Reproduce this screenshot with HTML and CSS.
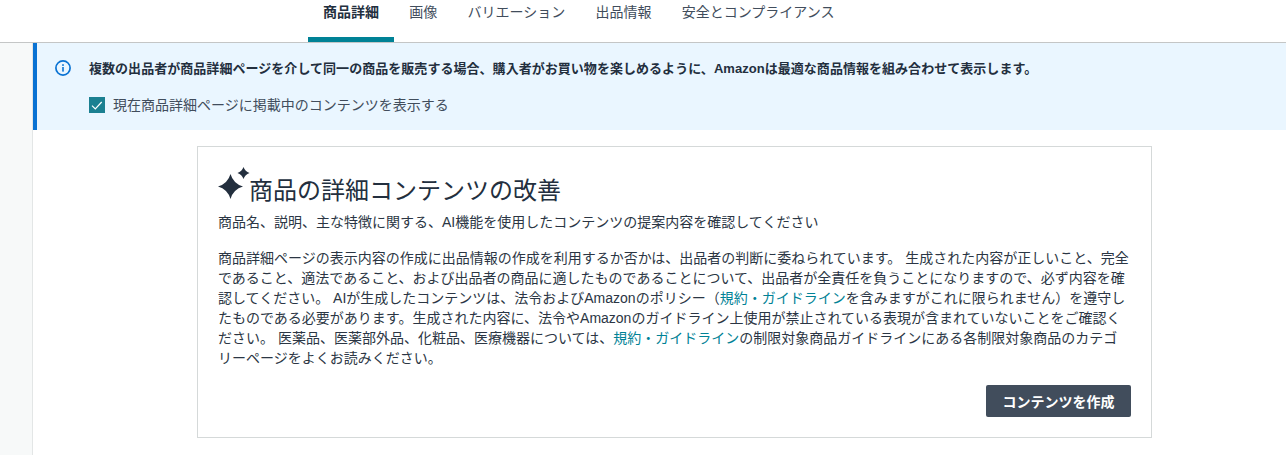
FILE: index.html
```html
<!DOCTYPE html>
<html lang="ja">
<head>
  <meta charset="UTF-8">
  <meta name="viewport" content="width=device-width, initial-scale=1.0">
  <title>商品詳細</title>
  <link rel="stylesheet" href="styles.css">
</head>
<body>
  <nav class="tabs">
    <a class="tab active" href="#">商品詳細</a>
    <a class="tab" href="#">画像</a>
    <a class="tab" href="#">バリエーション</a>
    <a class="tab" href="#">出品情報</a>
    <a class="tab" href="#">安全とコンプライアンス</a>
  </nav>

  <div class="page">
    <div class="side"></div>
    <main class="content">
      <div class="alert">
        <svg class="info-icon" viewBox="0 0 16 16" width="16" height="16">
          <circle cx="8" cy="8" r="7.1" fill="none" stroke="#0972d3" stroke-width="1.7"/>
          <rect x="7.2" y="7" width="1.6" height="4.6" fill="#0972d3"/>
          <rect x="7.2" y="4.2" width="1.6" height="1.7" fill="#0972d3"/>
        </svg>
        <div class="alert-body">
          <p class="alert-text">複数の出品者が商品詳細ページを介して同一の商品を販売する場合、購入者がお買い物を楽しめるように、Amazonは最適な商品情報を組み合わせて表示します。</p>
          <label class="check">
            <span class="box">
              <svg viewBox="0 0 16 16" width="16" height="16">
                <path d="M3 8.700l3.300 3.300 6.400-7" fill="none" stroke="#fff" stroke-width="1.2"/>
              </svg>
            </span>
            現在商品詳細ページに掲載中のコンテンツを表示する
          </label>
        </div>
      </div>

      <section class="card">
        <h1 class="card-title">
          <svg class="sparkle" viewBox="0 0 32 32" width="32" height="32">
            <path d="M12.500 7Q15.300 16.700 25 19.500 15.300 22.300 12.500 32 9.700 22.300 0 19.500 9.700 16.700 12.500 7z" fill="#232f3e"/>
            <path d="M25.500 0Q27.100 4.400 31.500 6 27.100 7.600 25.500 12 23.900 7.600 19.500 6 23.900 4.400 25.500 0z" fill="#232f3e"/>
          </svg>
          <span class="card-title-text">商品の詳細コンテンツの改善</span>
        </h1>
        <p class="card-sub">商品名、説明、主な特徴に関する、AI機能を使用したコンテンツの提案内容を確認してください</p>
        <p class="card-text">商品詳細ページの表示内容の作成に出品情報の作成を利用するか否かは、出品者の判断に委ねられています。 生成された内容が正しいこと、完全であること、適法であること、および出品者の商品に適したものであることについて、出品者が全責任を負うことになりますので、必ず内容を確認してください。 AIが生成したコンテンツは、法令およびAmazonのポリシー（<a href="#">規約・ガイドライン</a>を含みますがこれに限られません）を遵守したものである必要があります。生成された内容に、法令やAmazonのガイドライン上使用が禁止されている表現が含まれていないことをご確認ください。 医薬品、医薬部外品、化粧品、医療機器については、<a href="#">規約・ガイドライン</a>の制限対象商品ガイドラインにある各制限対象商品のカテゴリーページをよくお読みください。</p>
        <div class="card-actions">
          <button class="btn">コンテンツを作成</button>
        </div>
      </section>
    </main>
  </div>
</body>
</html>
```

FILE: styles.css
```css
html, body {
  height: 100%;
}
body {
  margin: 0;
  overflow: hidden;
  background: #fff;
  color: #232f3e;
  font-family: "Liberation Sans", "Noto Sans CJK JP", sans-serif;
  font-size: 14px;
}
.tabs {
  display: flex;
  height: 42px;
  padding-left: 308px;
  border-bottom: 1px solid #c4c6c6;
  background: #fff;
}
.tab {
  height: 42px;
  box-sizing: border-box;
  padding: 2px 15.12px 0;
  color: #414d5c;
  font-size: 14px;
  line-height: 20px;
  text-decoration: none;
}
.tab.active {
  border-bottom: 5px solid #008296;
  color: #232f3e;
  font-weight: 700;
}
.page {
  display: flex;
  height: 412px;
}
.side {
  width: 32px;
  background: #f7f9f9;
  border-right: 1px solid #e3e6e6;
}
.content {
  flex: 1;
}
.alert {
  display: flex;
  gap: 18px;
  height: 87px;
  box-sizing: border-box;
  padding: 16px 16px 0 18px;
  background: #eaf6ff;
  border-left: 4px solid #0972d3;
}
.info-icon {
  margin-top: 1px;
  flex: none;
}
.alert-body {
  flex: 1;
}
.alert-text {
  margin: 0;
  color: #232f3e;
  font-size: 13px;
  font-weight: 700;
  letter-spacing: .04px;
  line-height: 20px;
}
.check {
  display: flex;
  align-items: center;
  gap: 8px;
  margin-top: 16px;
  color: #414d5c;
  font-size: 14px;
  line-height: 20px;
}
.box {
  display: flex;
  width: 16px;
  height: 16px;
  background: #1b8091;
}
.card {
  width: 955px;
  height: 292px;
  box-sizing: border-box;
  margin: 16px 0 0 164px;
  padding: 20px;
  border: 1px solid #d5d9d9;
  background: #fff;
}
.card-title {
  display: flex;
  align-items: flex-end;
  margin: 0;
  color: #232f3e;
  font-size: 24px;
  font-weight: 400;
  line-height: 34px;
}
.sparkle {
  flex: none;
}
.card-title-text {
  margin-left: -1px;
  margin-bottom: -9px;
}
.card-sub {
  margin: 13px 0 0;
  color: #2b3644;
  font-size: 14px;
  line-height: 20px;
}
.card-text {
  margin: 16px 0 0;
  color: #2b3644;
  font-size: 14px;
  line-height: 20px;
}
.card-text a {
  color: #008296;
  text-decoration: none;
}
.card-actions {
  display: flex;
  justify-content: flex-end;
  margin-top: 17px;
}
.btn {
  width: 145px;
  height: 32px;
  padding: 0;
  border: none;
  border-radius: 2px;
  background: #414d5c;
  color: #fff;
  font-family: inherit;
  font-size: 14px;
  font-weight: 700;
}
```
